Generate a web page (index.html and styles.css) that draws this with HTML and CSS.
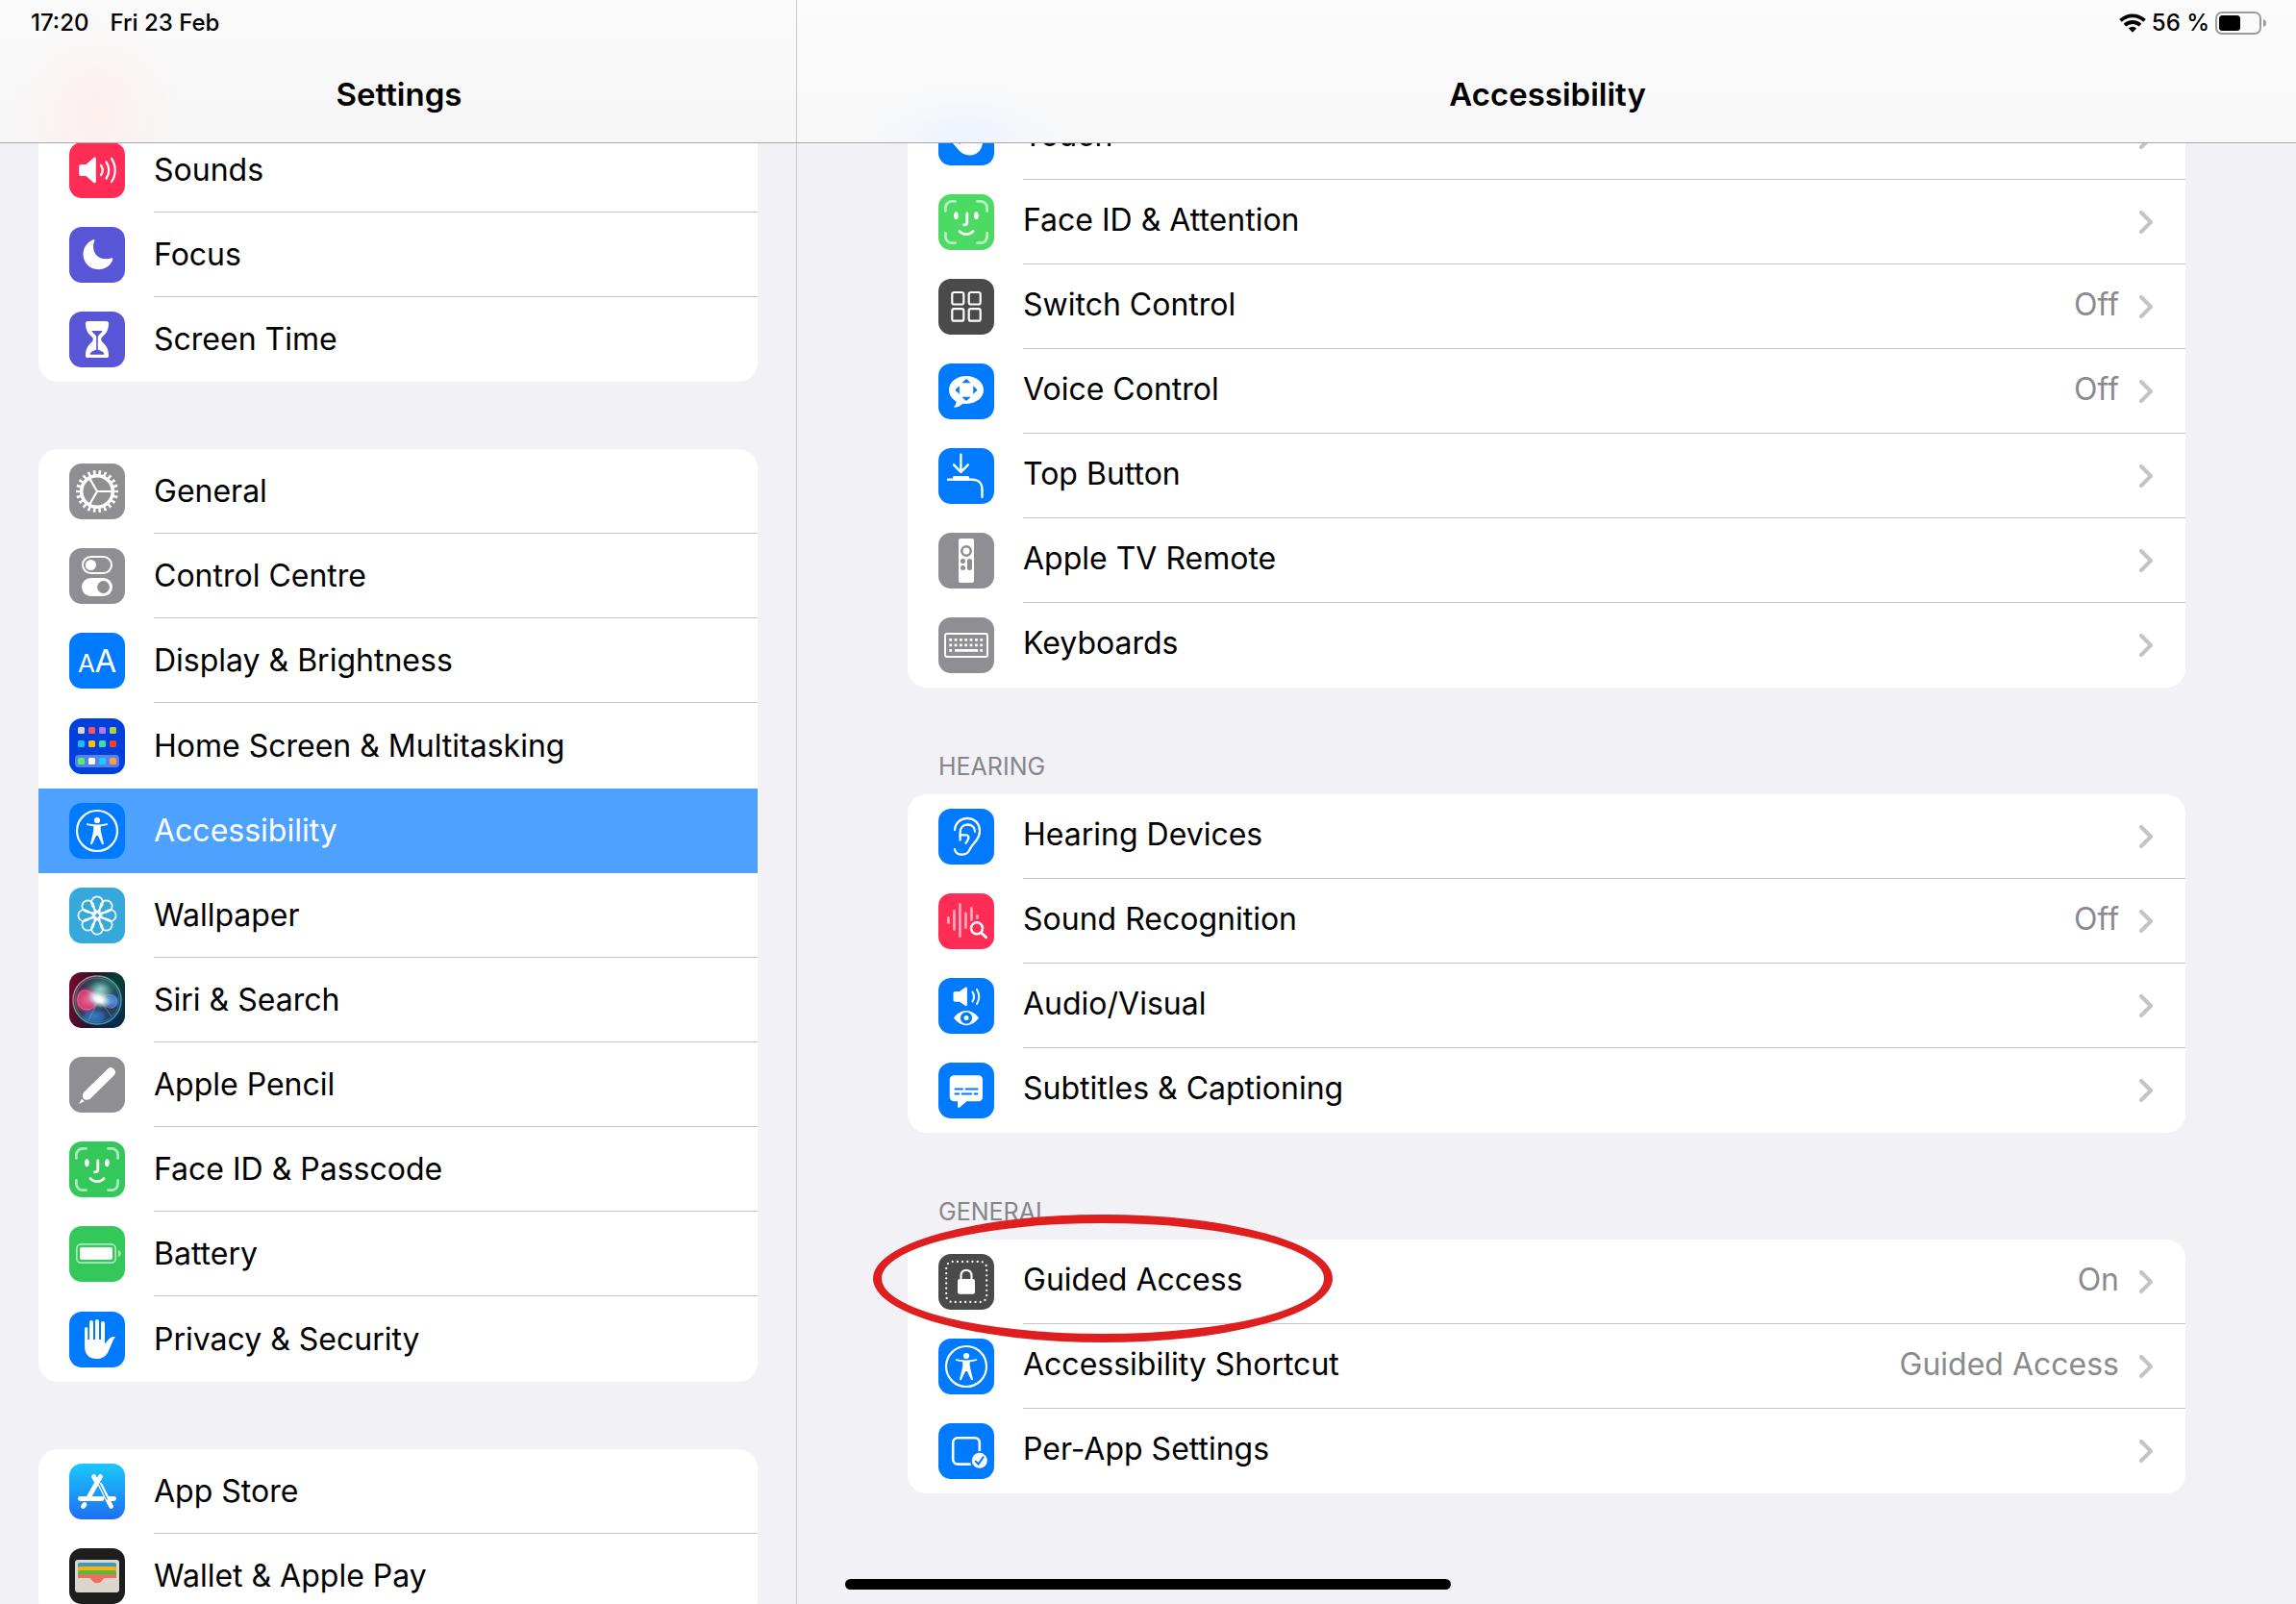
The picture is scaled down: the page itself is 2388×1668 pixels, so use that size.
FILE: index.html
```html
<!DOCTYPE html>
<html lang="en">
<head>
    <meta charset="UTF-8">
    <meta name="viewport" content="width=device-width, initial-scale=1.0">
    <title>Settings - Accessibility</title>
    <link rel="stylesheet" href="styles.css">
</head>
<body>
    <!-- Shapes used by more than one row -->
    <svg class="sprite" aria-hidden="true">
        <symbol id="person" viewBox="0 0 58 58">
            <circle cx="29" cy="29" r="21" fill="none" stroke="#fff" stroke-width="2.2"/>
            <circle cx="29" cy="18" r="3.1" fill="#fff"/>
            <path fill="#fff" d="M18.9 21.2c3.3.8 6.7 1.3 10.1 1.3s6.8-.5 10.1-1.3c1.2-.2 1.5 1.5.4 1.8-2.2.6-4.4 1-6.7 1.3-.4 3 .1 5.7.9 8.600l2.200 9c.3 1.300-1.600 1.800-2 .6L29.900 34h-1.800l-4 8.500c-.4 1.200-2.300.7-2-.6l2.200-9c.8-2.900 1.300-5.600.9-8.600-2.300-.3-4.500-.7-6.700-1.300-1.100-.3-.8-2 .4-1.800z"/>
        </symbol>
        <symbol id="face" viewBox="0 0 58 58">
            <g fill="none" stroke="#fff" stroke-width="2.8" stroke-linecap="round">
                <path opacity=".6" d="M7.4 17.5v-3.5a6.6 6.6 0 0 1 6.6-6.6h3.5M40.5 7.4h3.5a6.6 6.6 0 0 1 6.6 6.6v3.5M50.6 40.5v3.5a6.6 6.6 0 0 1-6.6 6.6h-3.5M17.5 50.6h-3.5a6.6 6.6 0 0 1-6.6-6.6v-3.5"/>
                <path d="M29.8 20v9.5c0 1.6-1 2.3-3.3 2.3M22 38.6c3.8 4 10.2 4 14 0"/>
            </g>
            <ellipse cx="18.4" cy="22.3" rx="2.3" ry="4" fill="#fff"/>
            <ellipse cx="39.4" cy="22.3" rx="2.3" ry="4" fill="#fff"/>
        </symbol>
        <symbol id="chevron" viewBox="0 0 14 24">
            <path d="M2 2l10 10-10 10" fill="none" stroke="#c4c4c7" stroke-width="4" stroke-linecap="round" stroke-linejoin="round"/>
        </symbol>
    </svg>

    <header class="topbar">
        <div class="topbar-left">
            <div class="status">
                <span>17:20</span>
                <span>Fri 23 Feb</span>
            </div>
            <h1 class="title">Settings</h1>
        </div>
        <div class="topbar-right">
            <div class="status status-end">
                <svg class="wifi" viewBox="0 0 28 20" aria-label="Wi-Fi">
                    <g fill="none" stroke="#000" stroke-width="3.8">
                        <path d="M1.5 7.4a18 18 0 0 1 25 0"/>
                        <path d="M6 12.2a11.6 11.6 0 0 1 16 0"/>
                    </g>
                    <path d="M14 19.8l-4.2-4.3a6 6 0 0 1 8.4 0z"/>
                </svg>
                <span>56 %</span>
                <svg class="battery" viewBox="0 0 54 24" aria-label="Battery">
                    <rect x="1" y="1" width="46" height="22" rx="6" fill="none" stroke="#9c9c9e" stroke-width="2"/>
                    <rect x="4" y="4" width="22" height="16" rx="3.5"/>
                    <path d="M50 8c2 .6 3 2 3 4s-1 3.4-3 4z" fill="#9c9c9e"/>
                </svg>
            </div>
            <h1 class="title">Accessibility</h1>
        </div>
    </header>

    <div class="panes">
        <nav class="sidebar" aria-label="Settings">
            <ul class="card">
                <li><a class="row" href="#">
                    <svg class="tile red" viewBox="0 0 58 58">
                        <path fill="#fff" d="M12.5 23h5l8-7c1-.9 2.3-.3 2.3 1v24c0 1.3-1.3 1.9-2.3 1l-8-7h-5c-1.5 0-2.3-.8-2.3-2.3v-7.4c0-1.5.8-2.3 2.3-2.3z"/>
                        <g fill="none" stroke="#fff" stroke-width="2.2" stroke-linecap="round">
                            <path d="M33 24c2.2 3 2.2 7 0 10"/>
                            <path d="M38.5 20.5c3.6 5 3.6 12 0 17"/>
                            <path d="M44 17c5 7 5 17 0 24"/>
                        </g>
                    </svg>
                    <span class="label">Sounds</span>
                </a></li>
                <li><a class="row" href="#">
                    <svg class="tile indigo" viewBox="0 0 58 58">
                        <path fill="#fff" d="M25 13.2c-6.4 2.6-10.5 8.3-10.5 15.1 0 9 6.8 15.9 15.8 15.9 6.8 0 12.5-3.8 14.9-10 .5-1.3-.4-2.2-1.6-1.8-1.5.6-3.2.8-5 .8-8.5 0-13.6-5-13.6-13.3 0-1.9.4-3.6 1.2-5.2.5-1.2-.2-1.9-1.2-1.5z"/>
                    </svg>
                    <span class="label">Focus</span>
                </a></li>
                <li><a class="row" href="#">
                    <svg class="tile indigo" viewBox="0 0 58 58">
                        <path fill="#fff" d="M19.5 10h19c1.8 0 2.7 1 2.6 2.6-.4 7.4-2.9 10.6-6.6 13.7-1.8 1.6-1.8 3.8 0 5.4 3.7 3.1 6.2 6.3 6.6 13.7.1 1.6-.8 2.6-2.6 2.6h-19c-1.8 0-2.7-1-2.6-2.6.4-7.4 2.9-10.6 6.6-13.7 1.8-1.6 1.8-3.8 0-5.4-3.7-3.1-6.2-6.3-6.6-13.7-.1-1.6.8-2.6 2.6-2.6z"/>
                        <path fill="#5856d6" d="M23.5 20h11c-.7 1.6-1.9 2.8-3.3 3.9-1.2 1-1.4 2-1.4 3.6v12.3c2.3.4 5 1.6 6.4 3.7.3.8 0 1.3-.8 1.3H22.6c-.8 0-1.1-.5-.8-1.3 1.4-2.1 4.1-3.3 6.4-3.7V27.5c0-1.6-.2-2.6-1.4-3.6-1.4-1.1-2.6-2.3-3.3-3.9z"/>
                    </svg>
                    <span class="label">Screen Time</span>
                </a></li>
            </ul>

            <ul class="card">
                <li><a class="row" href="#">
                    <svg class="tile gray" viewBox="0 0 58 58">
                        <g fill="none" stroke="#fff">
                            <circle cx="29" cy="29" r="19.5" stroke-width="5" pathLength="220" stroke-dasharray="4.6 5.4" stroke-dashoffset="2.3"/>
                            <circle cx="29" cy="29" r="16.3" stroke-width="3.6"/>
                            <path stroke-width="2.2" d="M29 29h15.5M29 29l-7.8-13.4M29 29l-7.8 13.4"/>
                        </g>
                    </svg>
                    <span class="label">General</span>
                </a></li>
                <li><a class="row" href="#">
                    <svg class="tile gray" viewBox="0 0 58 58">
                        <rect x="14" y="9" width="30" height="17" rx="8.5" fill="none" stroke="#fff" stroke-width="2"/>
                        <circle cx="22.4" cy="17.5" r="5.6" fill="#fff"/>
                        <rect x="13" y="31" width="32" height="19" rx="9.5" fill="#fff"/>
                        <circle cx="35.5" cy="40.5" r="6.4" fill="#8e8e93"/>
                    </svg>
                    <span class="label">Control Centre</span>
                </a></li>
                <li><a class="row" href="#">
                    <svg class="tile blue" viewBox="0 0 58 58">
                        <text class="tile-text" x="18" y="41" font-size="26">A</text>
                        <text class="tile-text" x="38" y="41" font-size="33">A</text>
                    </svg>
                    <span class="label">Display &amp; Brightness</span>
                </a></li>
                <li><a class="row row-tall" href="#">
                    <svg class="tile home" viewBox="0 0 58 58">
                        <rect x="6" y="38" width="46" height="13" rx="4" fill="#fff" opacity=".35"/>
                        <rect x="9" y="9" width="7" height="7" rx="1.5" fill="#d9d7cc"/>
                        <rect x="20" y="9" width="7" height="7" rx="1.5" fill="#ff4f67"/>
                        <rect x="31" y="9" width="7" height="7" rx="1.5" fill="#b574fb"/>
                        <rect x="42" y="9" width="7" height="7" rx="1.5" fill="#b1d136"/>
                        <rect x="9" y="23" width="7" height="7" rx="1.5" fill="#18bdfb"/>
                        <rect x="20" y="23" width="7" height="7" rx="1.5" fill="#ffbf00"/>
                        <rect x="31" y="23" width="7" height="7" rx="1.5" fill="#3edc9e"/>
                        <rect x="42" y="23" width="7" height="7" rx="1.5" fill="#ff3b30"/>
                        <rect x="9" y="41" width="7" height="7" rx="1.5" fill="#55ef70"/>
                        <rect x="20" y="41" width="7" height="7" rx="1.5" fill="#fff"/>
                        <rect x="31" y="41" width="7" height="7" rx="1.5" fill="#18cdff"/>
                        <rect x="42" y="41" width="7" height="7" rx="1.5" fill="#ff9a45"/>
                    </svg>
                    <span class="label">Home Screen &amp; Multitasking</span>
                </a></li>
                <li><a class="row selected" href="#" aria-current="page">
                    <svg class="tile blue"><use href="#person"/></svg>
                    <span class="label">Accessibility</span>
                </a></li>
                <li><a class="row" href="#">
                    <svg class="tile sky" viewBox="0 0 58 58">
                        <defs>
                            <path id="petal" d="M29 26c-2-3.5-6-6.5-6-10.6a6 6 0 0 1 12 0c0 4.1-4 7.1-6 10.6z"/>
                        </defs>
                        <g fill="none" stroke="#fff" stroke-width="1.7">
                            <use href="#petal"/>
                            <use href="#petal" transform="rotate(45 29 29)"/>
                            <use href="#petal" transform="rotate(90 29 29)"/>
                            <use href="#petal" transform="rotate(135 29 29)"/>
                            <use href="#petal" transform="rotate(180 29 29)"/>
                            <use href="#petal" transform="rotate(225 29 29)"/>
                            <use href="#petal" transform="rotate(270 29 29)"/>
                            <use href="#petal" transform="rotate(315 29 29)"/>
                            <circle cx="29" cy="29" r="3.4"/>
                        </g>
                    </svg>
                    <span class="label">Wallpaper</span>
                </a></li>
                <li><a class="row" href="#">
                    <svg class="tile siri" viewBox="0 0 58 58">
                        <defs>
                            <linearGradient id="siri-ring" x1="0" y1="0" x2="1" y2="1">
                                <stop offset="0" stop-color="#e07a94"/>
                                <stop offset=".45" stop-color="#43b08d"/>
                                <stop offset="1" stop-color="#3f8fd8"/>
                            </linearGradient>
                            <radialGradient id="siri-pink">
                                <stop offset="0" stop-color="#f0588c"/>
                                <stop offset=".7" stop-color="#d8336b" stop-opacity=".85"/>
                                <stop offset="1" stop-color="#b02860" stop-opacity="0"/>
                            </radialGradient>
                            <radialGradient id="siri-teal">
                                <stop offset="0" stop-color="#6fd0bb" stop-opacity=".9"/>
                                <stop offset="1" stop-color="#1f7a62" stop-opacity="0"/>
                            </radialGradient>
                            <radialGradient id="siri-blue">
                                <stop offset="0" stop-color="#3aa0f0"/>
                                <stop offset=".6" stop-color="#2a7fd6" stop-opacity=".8"/>
                                <stop offset="1" stop-color="#12408c" stop-opacity="0"/>
                            </radialGradient>
                            <radialGradient id="siri-glow">
                                <stop offset="0" stop-color="#fff"/>
                                <stop offset=".35" stop-color="#f0fdff" stop-opacity=".95"/>
                                <stop offset="1" stop-color="#a8e4e8" stop-opacity="0"/>
                            </radialGradient>
                        </defs>
                        <circle cx="29" cy="29" r="24.5" fill="#3a4a66" opacity=".6"/>
                        <ellipse cx="33" cy="17" rx="19" ry="15" fill="url(#siri-teal)"/>
                        <ellipse cx="26" cy="46" rx="16" ry="10" fill="url(#siri-blue)" opacity=".7"/>
                        <ellipse cx="18" cy="29" rx="14" ry="14" fill="url(#siri-pink)"/>
                        <ellipse cx="44" cy="30" rx="10" ry="9" fill="url(#siri-blue)"/>
                        <path d="M29 28c-6-8-15-13-19-5-4 9 2 17 10 16 5-1 8-6 11-10 4-4 9-7 14-5 6 3 6 11 0 13-5 1-10-3-16-9z" fill="#ff6f9c" fill-opacity=".15" stroke="#bcd8f5" stroke-opacity=".5" stroke-width=".8"/>
                        <path d="M31 28L20 50M31 28l13 18" stroke="#a796d8" stroke-opacity=".6" stroke-width="1"/>
                        <circle cx="31" cy="25" r="15" fill="url(#siri-glow)" opacity=".45"/>
                        <ellipse cx="31" cy="28" rx="13" ry="8" fill="url(#siri-glow)" transform="rotate(25 31 28)"/>
                        <circle cx="29" cy="29" r="25" fill="none" stroke="url(#siri-ring)" stroke-width="1.5"/>
                        <circle cx="29" cy="29" r="23" fill="none" stroke="url(#siri-ring)" stroke-width=".7" opacity=".7"/>
                    </svg>
                    <span class="label">Siri &amp; Search</span>
                </a></li>
                <li><a class="row" href="#">
                    <svg class="tile gray" viewBox="0 0 58 58">
                        <path fill="#fff" d="M40.3 12.3a4.7 4.7 0 0 1 6.6 6.6L22 43.5c-1.5 1-3.2 1.5-4.6 1.3-1.8-.4-3.1-1.7-3.4-3.4-.2-1.4.3-3.1 1.3-4.6zM13 43.800l2.700 2.500L10 49z"/>
                    </svg>
                    <span class="label">Apple Pencil</span>
                </a></li>
                <li><a class="row" href="#">
                    <svg class="tile green"><use href="#face"/></svg>
                    <span class="label">Face ID &amp; Passcode</span>
                </a></li>
                <li><a class="row" href="#">
                    <svg class="tile green" viewBox="0 0 58 58">
                        <rect x="7.8" y="18.8" width="40.4" height="19.4" rx="4.5" fill="none" stroke="#fff" stroke-width="1.7" opacity=".6"/>
                        <rect x="11" y="22" width="34" height="13" rx="2.2" fill="#fff"/>
                        <path d="M51 25c1.8.6 2.7 1.9 2.7 3.5s-.9 2.9-2.7 3.5z" fill="#fff" opacity=".6"/>
                    </svg>
                    <span class="label">Battery</span>
                </a></li>
                <li><a class="row row-tall" href="#">
                    <svg class="tile blue" viewBox="0 0 58 58">
                        <g fill="none" stroke="#fff" stroke-linecap="round">
                            <path stroke-width="3.2" d="M17.7 17.6V34"/>
                            <path stroke-width="4" d="M23 11v22M29 10v22M35 12v22"/>
                        </g>
                        <path fill="#fff" d="M16.1 29h20.9v4.5l4.2-4.9c1.5-1.7 3.5-2.7 5.8-2.5.8.1.9.7.4 1.2-1 1-1.7 2.5-2.5 4.4l-3.7 8.5c-2.3 5.6-6.4 8.8-12.6 8.8-7.8 0-12.5-4.5-12.5-12.5z"/>
                    </svg>
                    <span class="label">Privacy &amp; Security</span>
                </a></li>
            </ul>

            <ul class="card">
                <li><a class="row" href="#">
                    <svg class="tile store" viewBox="0 0 58 58">
                        <g fill="none" stroke="#fff" stroke-width="4.8" stroke-linecap="round">
                            <path d="M11.4 36.5h22.6"/>
                            <path d="M41 36.5h5.5"/>
                            <path d="M25.5 13.5L28 18M32.5 22.5l11 22"/>
                            <path d="M32.5 13.5L20 35.5"/>
                            <path d="M16 42.5l-1.5 2"/>
                        </g>
                        <path d="M31 20.5l8.5 17" stroke="#1b9bf8" stroke-width="1.3"/>
                    </svg>
                    <span class="label">App Store</span>
                </a></li>
                <li><a class="row" href="#">
                    <svg class="tile black" viewBox="0 0 58 58">
                        <rect x="6" y="12" width="46" height="34" rx="3" fill="#d9d6cc"/>
                        <path fill="#3b99c9" d="M9 20v-3a2 2 0 0 1 2-2h36a2 2 0 0 1 2 2v3z"/>
                        <path fill="#ffb003" d="M9 24v-3a2 2 0 0 1 2-2h36a2 2 0 0 1 2 2v3z"/>
                        <path fill="#4fbe3d" d="M9 28v-3a2 2 0 0 1 2-2h36a2 2 0 0 1 2 2v3z"/>
                        <path fill="#f26d5f" d="M9 31v-2a2 2 0 0 1 2-2h36a2 2 0 0 1 2 2v2H38c-1.8 0-2.5.8-3.6 2.2-1.3 1.8-2.9 3-5.4 3s-4.1-1.2-5.4-3C22.5 31.8 21.8 31 20 31z"/>
                    </svg>
                    <span class="label">Wallet &amp; Apple Pay</span>
                </a></li>
            </ul>
        </nav>

        <main class="detail">
            <ul class="card">
                <li><a class="row" href="#">
                    <svg class="tile blue" viewBox="0 0 58 58">
                        <path fill="#fff" d="M20 8a3 3 0 0 1 6 0v16h16c2.5 2 4 5 4 9 0 9-6 14.4-13.5 14.4-5 0-8.5-1.8-11.5-5.4L12.5 32c1-2.5 4-3 6.5-.5L20 33z"/>
                        <path d="M21.8 30v5.5" stroke="#007aff" stroke-width="2"/>
                    </svg>
                    <span class="label">Touch</span>
                    <svg class="chevron"><use href="#chevron"/></svg>
                </a></li>
                <li><a class="row" href="#">
                    <svg class="tile lime"><use href="#face"/></svg>
                    <span class="label">Face ID &amp; Attention</span>
                    <svg class="chevron"><use href="#chevron"/></svg>
                </a></li>
                <li><a class="row" href="#">
                    <svg class="tile dark" viewBox="0 0 58 58">
                        <g fill="none" stroke="#fff" stroke-width="2.2">
                            <rect x="14.3" y="14" width="12" height="12.5" rx="2"/>
                            <rect x="31.7" y="14" width="12" height="12.5" rx="2"/>
                            <rect x="14.3" y="31.2" width="12" height="12.5" rx="2"/>
                            <rect x="31.7" y="31.2" width="12" height="12.5" rx="2"/>
                        </g>
                    </svg>
                    <span class="label">Switch Control</span>
                    <span class="value">Off</span>
                    <svg class="chevron"><use href="#chevron"/></svg>
                </a></li>
                <li><a class="row" href="#">
                    <svg class="tile blue" viewBox="0 0 58 58">
                        <path fill="#fff" d="M29 13c10 0 18 6.3 18 14.5S39 42 29 42c-1.3 0-2.5-.1-3.7-.3-2.1 2.3-5 3.8-8.3 4-.8 0-1-.8-.5-1.3 1.4-1.4 2-3 2-5C13.8 36.7 11 32.5 11 27.5 11 19.3 19 13 29 13z"/>
                        <path fill="#007aff" d="M29 16l4.7 4.2h-9.4zM29 39l4.7-4.2h-9.4zM17.3 27.5l4.5-4.3v8.6zM40.7 27.5l-4.5-4.3v8.6z"/>
                    </svg>
                    <span class="label">Voice Control</span>
                    <span class="value">Off</span>
                    <svg class="chevron"><use href="#chevron"/></svg>
                </a></li>
                <li><a class="row" href="#">
                    <svg class="tile blue" viewBox="0 0 58 58">
                        <g fill="none" stroke="#fff" stroke-width="2.4" stroke-linecap="round" stroke-linejoin="round">
                            <path d="M23.4 6.7v18M16 17.3l7.4 7.6 7.4-7.6"/>
                            <path d="M10 32.8h25.5c6.5 0 10 4 10 10v8"/>
                        </g>
                        <path d="M15 32v-1.5c0-.9.5-1.5 1.5-1.5h14c1 0 1.5.6 1.5 1.5V32z" fill="#fff"/>
                    </svg>
                    <span class="label">Top Button</span>
                    <svg class="chevron"><use href="#chevron"/></svg>
                </a></li>
                <li><a class="row" href="#">
                    <svg class="tile gray" viewBox="0 0 58 58">
                        <rect x="21" y="6" width="16" height="46" rx="2" fill="#fff"/>
                        <circle cx="29" cy="19" r="4.7" fill="none" stroke="#8e8e93" stroke-width="2.6"/>
                        <circle cx="25.5" cy="29.6" r="2.5" fill="#8e8e93"/>
                        <circle cx="25.5" cy="36.4" r="2.5" fill="#8e8e93"/>
                        <rect x="30" y="27" width="5" height="12" rx="2.5" fill="#8e8e93"/>
                    </svg>
                    <span class="label">Apple TV Remote</span>
                    <svg class="chevron"><use href="#chevron"/></svg>
                </a></li>
                <li><a class="row" href="#">
                    <svg class="tile gray" viewBox="0 0 58 58">
                        <rect x="7" y="17" width="44" height="24" rx="2" fill="none" stroke="#fff" stroke-width="2"/>
                        <g fill="none" stroke="#fff" stroke-width="2.8">
                            <path stroke-dasharray="2.8 2.54" d="M11.3 23.4h35M11.3 28.8h35"/>
                            <path d="M11.3 34.3h2.8M17 34.3h24.2M43.3 34.3h2.8"/>
                        </g>
                    </svg>
                    <span class="label">Keyboards</span>
                    <svg class="chevron"><use href="#chevron"/></svg>
                </a></li>
            </ul>

            <h2 class="section">HEARING</h2>
            <ul class="card">
                <li><a class="row" href="#">
                    <svg class="tile blue" viewBox="0 0 58 58">
                        <g fill="none" stroke="#fff" stroke-width="2.3" stroke-linecap="round" stroke-linejoin="round">
                            <path d="M17 22c.5-7 6-12 13-12 7.5 0 13 5.5 13 13 0 5-2.2 9-6.2 13.2-2.5 2.7-3.3 4.500-4.700 7-1.500 3-4 4.500-7.600 4.500-4 0-6.800-2-7.500-5.500"/>
                            <path d="M22.6 32.5V25c0-5 3-8.5 7.700-8.500S38 19.500 38 23.800"/>
                            <path d="M22.8 27.3h5.500c2.800 0 3.700 1.900 2.700 4.200-.6 1.500-1.500 2.900-2.500 4.200"/>
                        </g>
                    </svg>
                    <span class="label">Hearing Devices</span>
                    <svg class="chevron"><use href="#chevron"/></svg>
                </a></li>
                <li><a class="row" href="#">
                    <svg class="tile red" viewBox="0 0 58 58">
                        <g fill="none" stroke="#fff" stroke-linecap="round">
                            <path stroke-width="2.8" opacity=".6" d="M10.4 25.5v5M16.4 18.5v19M22.4 11.5v33M28.4 21v14.5M34.4 15.5v12M40.4 23.5v2"/>
                            <circle cx="40" cy="36.3" r="6" stroke-width="2.5" fill="#ff2d55"/>
                            <path stroke-width="2.9" d="M44.600 41l5 4.800"/>
                        </g>
                    </svg>
                    <span class="label">Sound Recognition</span>
                    <span class="value">Off</span>
                    <svg class="chevron"><use href="#chevron"/></svg>
                </a></li>
                <li><a class="row" href="#">
                    <svg class="tile blue" viewBox="0 0 58 58">
                        <path fill="#fff" d="M17.5 14h4.5l5.9-4.2c1-.7 2-.2 2 1v17c0 1.2-1 1.7-2 1L22 24.7h-4.5c-1.3 0-2-.7-2-2V16c0-1.3.7-2 2-2z"/>
                        <path fill="none" stroke="#fff" stroke-width="2" stroke-linecap="round" d="M35.5 14.5c1.8 3 1.8 7 0 10M40 12c2.8 4.7 2.8 10.5 0 15"/>
                        <path fill="#fff" d="M16 41.6C19 37.2 23.7 34 29 34s10 3.2 13 7.6C39 46 34.3 49.2 29 49.2S19 46 16 41.6z"/>
                        <circle cx="29" cy="41.6" r="4.3" fill="none" stroke="#007aff" stroke-width="3.6"/>
                    </svg>
                    <span class="label">Audio/Visual</span>
                    <svg class="chevron"><use href="#chevron"/></svg>
                </a></li>
                <li><a class="row" href="#">
                    <svg class="tile blue" viewBox="0 0 58 58">
                        <path fill="#fff" d="M17 13.2h24c3.5 0 5 1.8 5 5v17c0 3.2-1.5 5-5 5H29.5l-7.3 6.3c-1 .9-2.2.5-2.2-.9v-5.4h-3c-3.5 0-5.3-1.8-5.3-5v-17c0-3.2 1.8-5 5.3-5z"/>
                        <path stroke="#007aff" stroke-width="2" stroke-linecap="round" d="M17.5 27.5H25M28.5 27.5h12M17.5 32.4h3.7M24.7 32.4h9.5M37.5 32.4h3"/>
                    </svg>
                    <span class="label">Subtitles &amp; Captioning</span>
                    <svg class="chevron"><use href="#chevron"/></svg>
                </a></li>
            </ul>

            <h2 class="section">GENERAL</h2>
            <ul class="card">
                <li class="marked"><a class="row" href="#">
                    <svg class="tile dark" viewBox="0 0 58 58">
                        <rect x="8.2" y="8" width="42" height="42" rx="6.5" fill="none" stroke="#fff" stroke-width="2.3" stroke-linecap="round" pathLength="150" stroke-dasharray="0 5"/>
                        <rect x="20" y="26" width="18" height="15.7" rx="2" fill="#fff"/>
                        <path fill="none" stroke="#fff" stroke-width="2.2" d="M23.5 27v-4.5c0-3.5 2.3-5.7 5.5-5.7s5.5 2.2 5.5 5.7V27"/>
                    </svg>
                    <span class="label">Guided Access</span>
                    <span class="value">On</span>
                    <svg class="chevron"><use href="#chevron"/></svg>
                </a></li>
                <li><a class="row" href="#">
                    <svg class="tile blue"><use href="#person"/></svg>
                    <span class="label">Accessibility Shortcut</span>
                    <span class="value">Guided Access</span>
                    <svg class="chevron"><use href="#chevron"/></svg>
                </a></li>
                <li><a class="row" href="#">
                    <svg class="tile blue" viewBox="0 0 58 58">
                        <rect x="15.2" y="15.2" width="27.6" height="27.4" rx="5" fill="none" stroke="#fff" stroke-width="2.6"/>
                        <circle cx="42.8" cy="38.8" r="9.8" fill="#007aff"/>
                        <circle cx="42.8" cy="38.8" r="8" fill="#fff"/>
                        <path fill="none" stroke="#007aff" stroke-width="2" stroke-linecap="round" stroke-linejoin="round" d="M38.8 39.6l2.8 3 5-7.4"/>
                    </svg>
                    <span class="label">Per-App Settings</span>
                    <svg class="chevron"><use href="#chevron"/></svg>
                </a></li>
            </ul>
        </main>
    </div>

    <div class="home-indicator"></div>
</body>
</html>
```

FILE: styles.css
```css
*, *::after {
    box-sizing: border-box;
}

body {
    margin: 0;
    height: 100vh;
    overflow: hidden;
    background-color: #f2f1f6;
    color: #000;
    font-family: Inter, "Liberation Sans", sans-serif;
    font-size: 32px;
    line-height: 40px;
}

ul {
    list-style: none;
    margin: 0;
    padding: 0;
}

.sprite {
    display: none;
}

/* Top bar */
.topbar {
    position: fixed;
    top: 0;
    left: 0;
    right: 0;
    z-index: 2;
    display: grid;
    grid-template-columns: 829px 1fr;
    border-bottom: 1px solid #a9a9ad;
}

.topbar-left, .topbar-right {
    height: 148px;
    padding: 8px 30px 0 32px;
}

.topbar-left {
    border-right: 1px solid #c9c9cc;
    background: radial-gradient(90px 110px at 100px 120px, #fdf0ef, transparent),
        linear-gradient(#fbfbfc, #f6f6f6);
}

.topbar-right {
    background: radial-gradient(110px 60px at 175px 148px, #edf4fd, transparent),
        linear-gradient(#fcfcfd, #f8f8f8);
}

.status {
    display: flex;
    align-items: center;
    gap: 22px;
    height: 32px;
    font-size: 24px;
    font-weight: 500;
}

.status-end {
    justify-content: flex-end;
    gap: 6px;
}

.wifi {
    width: 28px;
    height: 20px;
}

.battery {
    width: 54px;
    height: 24px;
}

.title {
    margin: 38px 0 0;
    font-size: 33px;
    font-weight: 600;
    line-height: 40px;
    text-align: center;
}

/* Panes */
.panes {
    display: grid;
    grid-template-columns: 829px 1fr;
    height: 100vh;
    overflow: hidden;
}

.sidebar {
    padding: 133px 40px 0;
    border-right: 1px solid #c9c9cc;
}

.sidebar .card {
    margin-bottom: 70px;
}

.detail {
    padding: 99px 115px 0;
}

.card {
    background-color: #fff;
    border-radius: 20px;
}

.row {
    display: flex;
    align-items: center;
    height: 88px;
    padding: 0 34px 0 32px;
    color: #000;
    text-decoration: none;
    background: linear-gradient(#c6c6c8, #c6c6c8) 120px 100% / 100% 1px no-repeat;
}

.row-tall {
    height: 89px;
}

li:last-child .row,
li:has(+ li .selected) .row {
    background: none;
}

.row.selected {
    background: #4da1ff;
    color: #fff;
}

.label {
    flex: 1;
    margin-left: 30px;
}

.detail .label, .detail .value {
    padding-bottom: 4px;
}

.value {
    color: #8a8a8e;
    margin-right: 21px;
}

.chevron {
    width: 14px;
    height: 24px;
}

.section {
    margin: 66px 0 13px 32px;
    font-size: 25px;
    font-weight: 400;
    line-height: 32px;
    color: #85858b;
}

/* Icon tiles */
.tile {
    width: 58px;
    height: 58px;
    border-radius: 13px;
}

.tile-text {
    fill: #fff;
    font-weight: 400;
    text-anchor: middle;
}

.red { background-color: #ff2d55; }
.indigo { background-color: #5856d6; }
.gray { background-color: #8e8e93; }
.blue { background-color: #007aff; }
.green { background-color: #34c759; }
.lime { background-color: #4cd964; }
.dark { background-color: #4a4a4a; }
.black { background-color: #1e1e1e; }
.sky { background-color: #36a9dc; }
.home { background-color: #0040dd; }
.store { background: linear-gradient(#1ac8fc, #1d6ff2); }
.siri { background: linear-gradient(100deg, #7a0a2c, #2a1030 45%, transparent 70%), linear-gradient(#0a3b34, #0a2a4a); }

/* Red ring drawn over the Guided Access row */
.marked {
    position: relative;
}

.marked::after {
    content: "";
    position: absolute;
    left: -36px;
    top: -26px;
    width: 478px;
    height: 133px;
    border: 9px solid #df1e20;
    border-radius: 50%;
    pointer-events: none;
}

.home-indicator {
    position: fixed;
    left: 50%;
    bottom: 15px;
    z-index: 3;
    width: 630px;
    height: 11px;
    border-radius: 6px;
    background-color: #000;
    transform: translateX(-50%);
}
```
